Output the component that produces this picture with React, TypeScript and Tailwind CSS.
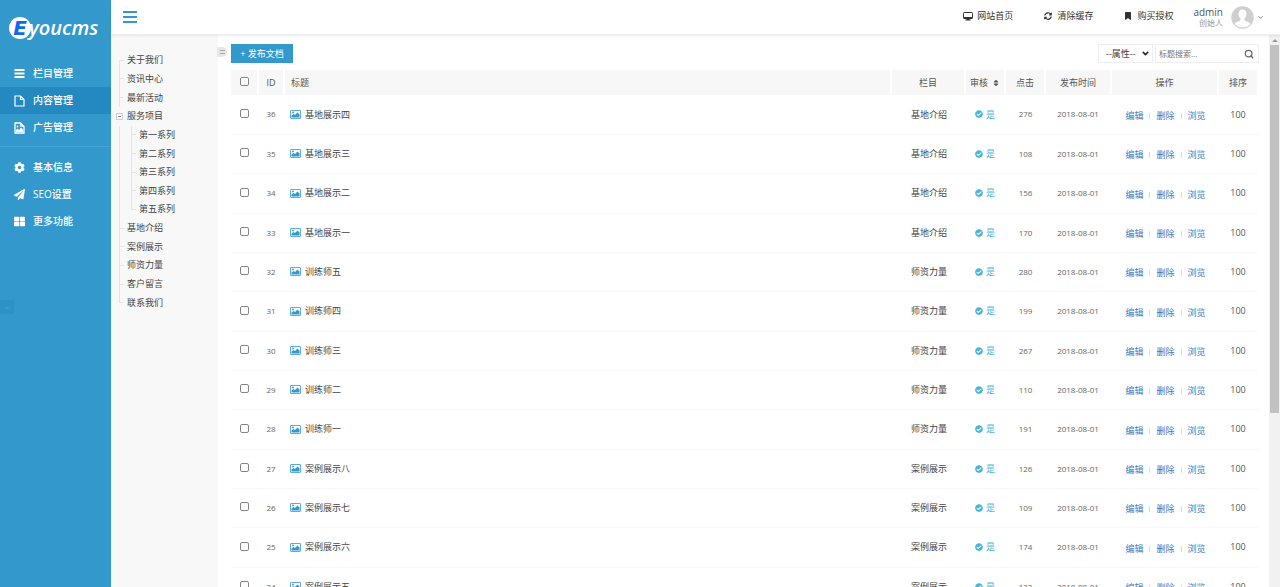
import type { ReactNode } from 'react';
import {
  FaBookmark,
  FaCheckCircle,
  FaCog,
  FaPaperPlane,
  FaSort,
  FaSyncAlt,
  FaThLarge,
} from 'react-icons/fa';
import { ChevronDown, Search } from 'lucide-react';

interface NavItem {
  icon: ReactNode;
  label: string;
  active?: boolean;
}

interface TreeNode {
  label: string;
  child?: boolean;
  open?: boolean;
  last?: boolean;
}

interface Article {
  id: number;
  title: string;
  category: string;
  clicks: number;
}

function BarsIcon() {
  return (
    <svg viewBox="0 0 22 22" className="size-[11px]" aria-hidden="true">
      <path d="M1 2h20v4H1zM1 9h20v4H1zM1 16h20v4H1z" fill="currentColor" />
    </svg>
  );
}

function FileIcon() {
  return (
    <svg viewBox="0 0 22 24" className="h-[12px] w-[11px]" aria-hidden="true">
      <path d="M2 2h11l7 7v13H2z" fill="none" stroke="currentColor" strokeWidth="2.4" />
      <path d="M13 2v7h7" fill="none" stroke="currentColor" strokeWidth="2.4" />
    </svg>
  );
}

function FileImageIcon() {
  return (
    <svg viewBox="0 0 22 24" className="h-[12px] w-[11px]" aria-hidden="true">
      <path d="M2 2h11l7 7v13H2z" fill="none" stroke="currentColor" strokeWidth="2.6" />
      <path d="M13 2v7h7z" fill="currentColor" stroke="currentColor" />
      <path d="M4 20v-4l3-3 3 3 4-5 4 4v5z" fill="currentColor" />
      <circle cx="7" cy="9" r="2" fill="currentColor" />
    </svg>
  );
}

function PictureIcon() {
  return (
    <svg viewBox="0 0 22 18" className="h-[9px] w-[11px] text-[#3398cc]" aria-hidden="true">
      <rect x="1" y="1" width="20" height="16" rx="1" fill="#fff" stroke="currentColor" strokeWidth="1.6" />
      <path d="M3 15v-4l4-3 3 2 5-5 4 4v6z" fill="currentColor" />
      <circle cx="6" cy="5" r="1.8" fill="currentColor" />
    </svg>
  );
}

const navGroups: NavItem[][] = [
  [
    { icon: <BarsIcon />, label: '栏目管理' },
    { icon: <FileIcon />, label: '内容管理', active: true },
    { icon: <FileImageIcon />, label: '广告管理' },
  ],
  [
    { icon: <FaCog className="size-[11px]" />, label: '基本信息' },
    { icon: <FaPaperPlane className="size-[11px]" />, label: 'SEO设置' },
    { icon: <FaThLarge className="size-[11px]" />, label: '更多功能' },
  ],
];

const treeNodes: TreeNode[] = [
  { label: '关于我们' },
  { label: '资讯中心' },
  { label: '最新活动' },
  { label: '服务项目', open: true },
  { label: '第一系列', child: true },
  { label: '第二系列', child: true },
  { label: '第三系列', child: true },
  { label: '第四系列', child: true },
  { label: '第五系列', child: true, last: true },
  { label: '基地介绍' },
  { label: '案例展示' },
  { label: '师资力量' },
  { label: '客户留言' },
  { label: '联系我们', last: true },
];

const articles: Article[] = [
  { id: 36, title: '基地展示四', category: '基地介绍', clicks: 276 },
  { id: 35, title: '基地展示三', category: '基地介绍', clicks: 108 },
  { id: 34, title: '基地展示二', category: '基地介绍', clicks: 156 },
  { id: 33, title: '基地展示一', category: '基地介绍', clicks: 170 },
  { id: 32, title: '训练师五', category: '师资力量', clicks: 280 },
  { id: 31, title: '训练师四', category: '师资力量', clicks: 199 },
  { id: 30, title: '训练师三', category: '师资力量', clicks: 267 },
  { id: 29, title: '训练师二', category: '师资力量', clicks: 110 },
  { id: 28, title: '训练师一', category: '师资力量', clicks: 191 },
  { id: 27, title: '案例展示八', category: '案例展示', clicks: 126 },
  { id: 26, title: '案例展示七', category: '案例展示', clicks: 109 },
  { id: 25, title: '案例展示六', category: '案例展示', clicks: 174 },
  { id: 24, title: '案例展示五', category: '案例展示', clicks: 122 },
];

function Logo() {
  return (
    <a href="#home" className="flex h-[60px] items-center pb-1 pl-[9px] text-white">
      <span
        className="flex size-[22px] items-center justify-center rounded-full bg-white
                   font-['DejaVu_Sans',sans-serif] text-[20px] font-bold italic leading-none text-[#1268ea]"
      >
        E
      </span>
      <span className="-ml-[2px] text-[20px] font-semibold italic leading-none">youcms</span>
    </a>
  );
}

function Sidebar() {
  return (
    <aside className="relative w-[111px] shrink-0 bg-[#3398cc] text-white">
      <Logo />
      <nav>
        {navGroups.map((group, i) => (
          <ul key={i} className={i > 0 ? 'mt-[5px] border-t border-[#48a3d2] pt-[7px]' : ''}>
            {group.map((item) => (
              <li key={item.label}>
                <a
                  href="#nav"
                  className={`flex h-[27px] items-center gap-[8px] pl-[14px] text-[10px] font-medium
                             ${item.active ? 'bg-[#2489c0]' : ''}`}
                >
                  {item.icon}
                  {item.label}
                </a>
              </li>
            ))}
          </ul>
        ))}
      </nav>
      <button
        aria-label="收起"
        className="absolute left-0 top-[300px] flex h-[14px] w-[14px] items-center justify-center bg-[#2e92c6] text-[8px] text-[#4fa9d6]"
      >
        «
      </button>
    </aside>
  );
}

function DesktopIcon() {
  return (
    <svg viewBox="0 0 20 18" className="h-[9px] w-[10px]" aria-hidden="true">
      <rect x="1" y="1" width="18" height="12" rx="1.5" fill="none" stroke="#333" strokeWidth="2" />
      <path d="M1 10h18v3H1zM7 13h6v2h2v2H5v-2h2z" fill="#333" />
    </svg>
  );
}

function Avatar() {
  return (
    <svg viewBox="0 0 46 46" className="size-[23px]" aria-hidden="true">
      <circle cx="23" cy="23" r="22.5" fill="#cfcfcf" />
      <path
        d="M23 7c-5 0-8 4-8 9 0 4 2 7 4 9v3c-2 3-9 3-12 8 4 5 10 7 16 7s12-2 16-7c-3-5-10-5-12-8v-3c2-2 4-5 4-9 0-5-3-9-8-9z"
        fill="#fff"
      />
    </svg>
  );
}

function TopBar() {
  return (
    <header className="z-10 flex h-[35px] shrink-0 items-center justify-between border-b border-[#eee] bg-white pl-3 pr-4 shadow-[0_1px_2px_rgba(0,0,0,0.08)]">
      <button aria-label="菜单" className="flex w-[14px] flex-col gap-[3px]">
        <span className="h-[2px] bg-[#3398cc]" />
        <span className="h-[2px] bg-[#3398cc]" />
        <span className="h-[2px] bg-[#3398cc]" />
      </button>
      <div className="flex items-center">
        <nav className="mb-[2px] flex gap-[30px] text-[9px] text-[#333]">
          <a href="#site" className="flex items-center gap-1">
            <DesktopIcon />
            网站首页
          </a>
          <a href="#cache" className="flex items-center gap-1">
            <FaSyncAlt className="h-[8px] w-[10px]" />
            清除缓存
          </a>
          <a href="#license" className="flex items-center gap-1">
            <FaBookmark className="h-[8px] w-[10px]" />
            购买授权
          </a>
        </nav>
        <button className="ml-5 flex items-center">
          <span className="flex flex-col text-right">
            <span className="text-[10px] leading-3 text-[#555]">admin</span>
            <span className="text-[8px] leading-[10px] text-[#999]">创始人</span>
          </span>
          <span className="ml-2 mr-[3px]">
            <Avatar />
          </span>
          <ChevronDown className="size-[7px] text-[#666]" strokeWidth={3} />
        </button>
      </div>
    </header>
  );
}

function Guide({ first, last }: { first?: boolean; last?: boolean }) {
  return (
    <span className="flex w-2 shrink-0 flex-col self-stretch">
      <span className={`w-[5px] flex-1 border-b border-[#e4e4e4] ${first ? '' : 'border-l'}`} />
      <span className={`w-[5px] flex-1 border-[#e4e4e4] ${last ? '' : 'border-l'}`} />
    </span>
  );
}

function CategoryTree() {
  return (
    <div className="relative w-[107px] shrink-0 bg-[#f8f8f8] pt-4">
      <ul className="grid h-[261px] auto-rows-fr pl-2 text-[9px] leading-3 text-[#444]">
        {treeNodes.map((node, i) => (
          <li key={node.label} className="flex items-center">
            {node.child && <span className="w-3 self-stretch border-l border-[#e4e4e4]" />}
            {node.open ? (
              <button
                aria-label="折叠"
                className="-ml-[3px] mr-1 flex size-[7px] items-center justify-center border border-[#ccc] bg-white"
              >
                <span className="h-px w-[3px] bg-[#888]" />
              </button>
            ) : (
              <Guide first={i === 0} last={node.last} />
            )}
            <a href="#category">{node.label}</a>
          </li>
        ))}
      </ul>
      <button
        aria-label="收起栏目"
        className="absolute -right-[9px] top-3 flex h-[10px] w-[10px] flex-col items-center justify-center gap-[2px] rounded-r-full bg-[#e6e6e6]"
      >
        <span className="h-px w-[5px] bg-[#aaa]" />
        <span className="h-px w-[5px] bg-[#aaa]" />
      </button>
    </div>
  );
}

function Checkbox({ label }: { label: string }) {
  return (
    <input
      type="checkbox"
      aria-label={label}
      className="mx-auto mb-[2px] block size-[9px] appearance-none rounded-[2px] border border-[#858585] bg-white"
    />
  );
}

function Toolbar() {
  return (
    <div className="flex items-center justify-between">
      <button className="h-[19px] w-[62px] bg-[#3398cc] text-[9px] leading-none text-white">+ 发布文档</button>
      <form className="flex gap-[2px] text-[9px]">
        <div className="relative">
          <select
            aria-label="属性"
            className="block h-[19px] w-[55px] appearance-none border border-[#eee] bg-white pl-[7px] text-[#444]"
          >
            <option>--属性--</option>
          </select>
          <ChevronDown
            className="pointer-events-none absolute right-[3px] top-[5px] size-[9px] text-[#222]"
            strokeWidth={4}
          />
        </div>
        <div className="flex h-[19px] w-[104px] items-center border border-[#eee] pl-[3px] pr-1">
          <input
            type="text"
            aria-label="标题搜索"
            placeholder="标题搜索..."
            className="w-full min-w-0 text-[8px] outline-none placeholder:text-[#777]"
          />
          <button type="button" aria-label="搜索">
            <Search className="size-[10px] text-[#666]" strokeWidth={3} />
          </button>
        </div>
      </form>
    </div>
  );
}

function ArticleTable() {
  return (
    <table className="mt-[7px] w-full table-fixed text-center text-[9px] text-[#444]">
      <colgroup>
        <col className="w-[27px]" />
        <col className="w-[26px]" />
        <col />
        <col className="w-[74px]" />
        <col className="w-[40px]" />
        <col className="w-[40px]" />
        <col className="w-[66px]" />
        <col className="w-[107px]" />
        <col className="w-[40px]" />
      </colgroup>
      <thead>
        <tr className="h-[25px] bg-[#f7f7f7] text-[#555] *:border-r-2 *:border-white *:font-normal">
          <th>
            <Checkbox label="全选" />
          </th>
          <th>ID</th>
          <th className="pl-[6px] text-left">标题</th>
          <th>栏目</th>
          <th>
            <span className="flex items-center justify-center gap-1">
              审核
              <FaSort className="size-[8px]" />
            </span>
          </th>
          <th>点击</th>
          <th>发布时间</th>
          <th>操作</th>
          <th>排序</th>
        </tr>
      </thead>
      <tbody>
        {articles.map((article) => (
          <tr key={article.id} className="h-[39px] border-b border-[#f7f7f7] nth-[3n]:h-[40px]">
            <td>
              <Checkbox label={article.title} />
            </td>
            <td className="text-[8px] text-[#666]">{article.id}</td>
            <td className="pl-[6px]">
              <a href="#article" className="flex items-center gap-1">
                <PictureIcon />
                {article.title}
              </a>
            </td>
            <td className="pl-[2px]">{article.category}</td>
            <td className="text-[#45b6d9]">
              <span className="flex items-center justify-center gap-[3px]">
                <FaCheckCircle className="size-[8px]" />是
              </span>
            </td>
            <td className="pl-px text-[8px] text-[#666]">{article.clicks}</td>
            <td className="text-[8px] text-[#666]">2018-08-01</td>
            <td className="pl-[2px] pt-[3px] text-[#3e78c0]">
              <span className="flex items-center justify-center gap-[6px]">
                <a href="#edit">编辑</a>
                <span className="h-[6px] w-px bg-[#ddd]" />
                <a href="#delete">删除</a>
                <span className="h-[6px] w-px bg-[#ddd]" />
                <a href="#view">浏览</a>
              </span>
            </td>
            <td className="text-[#555]">100</td>
          </tr>
        ))}
      </tbody>
    </table>
  );
}

function ScrollTrack() {
  return (
    <div className="flex w-[11px] shrink-0 flex-col items-center bg-[#f1f1f1]">
      <span className="flex h-[10px] items-center">
        <span className="border-x-[3px] border-b-[3px] border-x-transparent border-b-[#999]" />
      </span>
      <span className="h-2/3 w-[9px] bg-[#c1c1c1]" />
    </div>
  );
}

export default function App() {
  return (
    <div className="flex h-screen overflow-hidden bg-white font-['Open_Sans','Noto_Sans_CJK_SC',sans-serif]">
      <Sidebar />
      <div className="flex min-w-0 flex-1 flex-col">
        <TopBar />
        <div className="flex min-h-0 flex-1">
          <CategoryTree />
          <main className="min-w-0 flex-1 overflow-hidden pl-[13px] pr-[10px] pt-[9px]">
            <Toolbar />
            <ArticleTable />
          </main>
          <ScrollTrack />
        </div>
      </div>
    </div>
  );
}
